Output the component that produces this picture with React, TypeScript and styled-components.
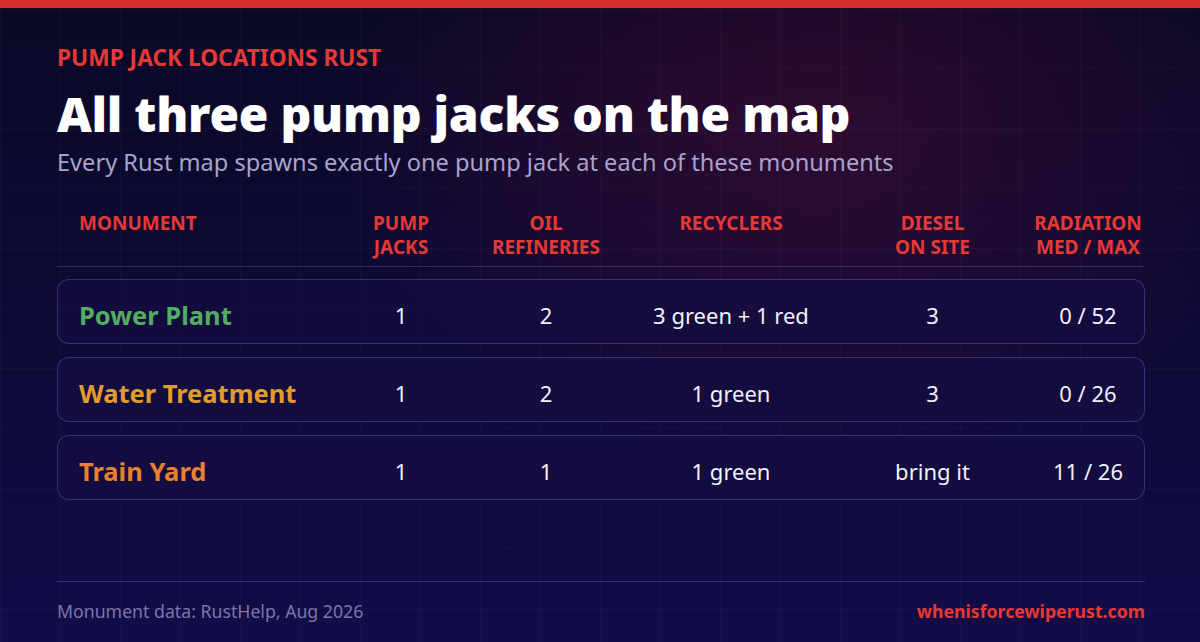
import React from "react";
import styled, { createGlobalStyle } from "styled-components";

const Global = createGlobalStyle`
  html, body { margin: 0; padding: 0; }
  body { width: 1200px; height: 642px; overflow: hidden; background: #0b0926; }
  * { box-sizing: border-box; }
`;

const Page = styled.div`
  position: relative;
  width: 1200px;
  height: 642px;
  font-family: "Noto Sans", "Open Sans", sans-serif;
  color: #fff;
  background:
    linear-gradient(rgba(255,255,255,0.025) 1px, transparent 1px),
    linear-gradient(90deg, rgba(255,255,255,0.025) 1px, transparent 1px),
    radial-gradient(ellipse 50% 65% at 68% 20%, rgba(58, 12, 50, 0.75), transparent 80%),
    linear-gradient(180deg, #0a0826 0%, #0e0a36 50%, #120c48 100%);
  background-size: 60px 60px, 60px 60px, 100% 100%, 100% 100%;
  display: flex;
  flex-direction: column;
  border-top: 8px solid #d32f2f;
  padding: 36px 55px 0 57px;
`;

const Eyebrow = styled.div`
  color: #e53935;
  font-weight: 700;
  font-size: 22.7px;
  line-height: 28px;
`;

const Title = styled.h1`
  margin: 14px 0 0;
  font-size: 48px;
  line-height: 56px;
  font-weight: 900;
  letter-spacing: -0.25px;
`;

const Subtitle = styled.p`
  margin: 4px 0 0;
  font-size: 23.6px;
  line-height: 32px;
  color: #a8a2cc;
`;

const cols = "262px 120px 170px 200px 203px 108px";

const HeaderRow = styled.div`
  margin-top: 33px;
  display: grid;
  grid-template-columns: ${cols};
  padding: 0 0 7px 22px;
  border-bottom: 1px solid rgba(110, 100, 190, 0.35);
`;

const HeadCell = styled.div<{ $left?: boolean }>`
  color: #e53935;
  font-weight: 700;
  font-size: 19px;
  line-height: 24px;
  text-align: ${(p) => (p.$left ? "left" : "center")};
  white-space: pre-line;
  height: 48px;
`;

const Rows = styled.div`
  margin-top: 12px;
  display: flex;
  flex-direction: column;
  gap: 13px;
`;

const Row = styled.div`
  display: grid;
  grid-template-columns: ${cols};
  align-items: center;
  height: 65px;
  padding: 10px 0 4px 21px;
  border: 1px solid rgba(100, 90, 185, 0.45);
  border-radius: 12px;
  background: rgba(20, 14, 66, 0.75);
`;

const Name = styled.div<{ $color: string }>`
  color: ${(p) => p.$color};
  font-weight: 700;
  font-size: 25.5px;
`;

const Cell = styled.div`
  text-align: center;
  font-size: 22px;
  color: #f2f0fa;
`;

const Spacer = styled.div`
  flex: 1;
`;

const Footer = styled.div`
  border-top: 1px solid rgba(100, 90, 185, 0.45);
  display: flex;
  justify-content: space-between;
  align-items: center;
  height: 61px;
  padding-bottom: 3px;
`;

const Source = styled.div`
  color: #7c76aa;
  font-size: 17.7px;
`;

const Site = styled.div`
  color: #e53935;
  font-weight: 700;
  font-size: 17.7px;
`;

const data = [
  { name: "Power Plant", color: "#52ad62", pj: "1", oil: "2", rec: "3 green + 1 red", diesel: "3", rad: "0 / 52" },
  { name: "Water Treatment", color: "#e39b2c", pj: "1", oil: "2", rec: "1 green", diesel: "3", rad: "0 / 26" },
  { name: "Train Yard", color: "#e8802f", pj: "1", oil: "1", rec: "1 green", diesel: "bring it", rad: "11 / 26" },
];

export default function App() {
  return (
    <>
      <Global />
      <Page>
        <Eyebrow>PUMP JACK LOCATIONS RUST</Eyebrow>
        <Title>All three pump jacks on the map</Title>
        <Subtitle>Every Rust map spawns exactly one pump jack at each of these monuments</Subtitle>
        <HeaderRow>
          <HeadCell $left>MONUMENT</HeadCell>
          <HeadCell>{"PUMP\nJACKS"}</HeadCell>
          <HeadCell>{"OIL\nREFINERIES"}</HeadCell>
          <HeadCell>RECYCLERS</HeadCell>
          <HeadCell>{"DIESEL\nON SITE"}</HeadCell>
          <HeadCell>{"RADIATION\nMED / MAX"}</HeadCell>
        </HeaderRow>
        <Rows>
          {data.map((d) => (
            <Row key={d.name}>
              <Name $color={d.color}>{d.name}</Name>
              <Cell>{d.pj}</Cell>
              <Cell>{d.oil}</Cell>
              <Cell>{d.rec}</Cell>
              <Cell>{d.diesel}</Cell>
              <Cell>{d.rad}</Cell>
            </Row>
          ))}
        </Rows>
        <Spacer />
        <Footer>
          <Source>Monument data: RustHelp, Aug 2026</Source>
          <Site>whenisforcewiperust.com</Site>
        </Footer>
      </Page>
    </>
  );
}
